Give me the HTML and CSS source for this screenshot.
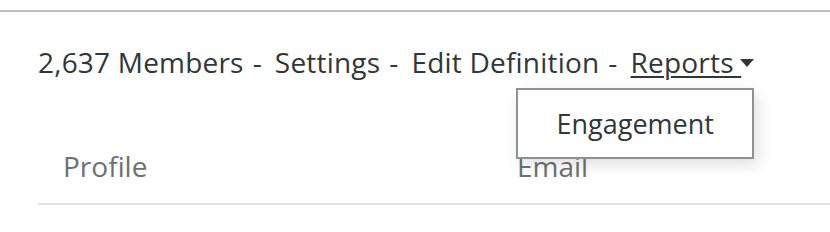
FILE: index.html
```html
<!DOCTYPE html>
<html lang="en">

<head>
    <meta charset="UTF-8">
    <meta name="viewport" content="width=device-width, initial-scale=1.0">
    <title>Members</title>
    <link rel="stylesheet" href="styles.css">
</head>

<body>
    <div class="topo"></div>
    <div class="segmento">
        <div class="acoes">
            <span>2,637 Members</span>
            <span class="sep">-</span>
            <a href="#">Settings</a>
            <span class="sep">-</span>
            <a href="#">Edit Definition</a>
            <span class="sep">-</span>
            <div class="relatorios">
                <a href="#" class="sublinhado">Reports <span class="seta"></span></a>
                <div class="menu">
                    <a href="#">Engagement</a>
                </div>
            </div>
        </div>
        <div class="cabecalho">
            <div class="col perfil">Profile</div>
            <div class="col email">Email</div>
        </div>
    </div>
</body>

</html>
```

FILE: styles.css
```css
body {
    margin: 0;
    font-family: "Open Sans", "Liberation Sans", sans-serif;
    background: #fff;
    color: #31363a;
}

.topo {
    height: 10px;
    border-bottom: 2px solid #bcc3c7;
}

.segmento {
    padding-left: 38px;
}

.acoes {
    display: flex;
    align-items: baseline;
    font-size: 28px;
    line-height: 38px;
    margin-top: 31px;
    letter-spacing: 0.2px;
}

.acoes a {
    color: #31363a;
    text-decoration: none;
}

.sep {
    margin: 0 13px 0 9px;
}

.relatorios {
    position: relative;
}

.acoes .sublinhado {
    text-decoration: underline;
    text-decoration-thickness: 2px;
    text-underline-offset: 3px;
}

.seta {
    display: inline-block;
    width: 0;
    height: 0;
    border-left: 7.5px solid transparent;
    border-right: 7.5px solid transparent;
    border-top: 8px solid #31363a;
    vertical-align: 6px;
    margin-left: -1px;
}

.menu {
    position: absolute;
    right: 0;
    top: 45px;
    width: 234px;
    height: 67px;
    background: #fff;
    border: 2px solid #8e9295;
    box-shadow: 4px 6px 14px rgba(0, 0, 0, 0.12);
    display: flex;
    align-items: center;
    justify-content: center;
    z-index: 2;
}

.menu a {
    font-size: 27px;
    letter-spacing: 0;
}

.cabecalho {
    display: flex;
    margin-top: 66px;
    height: 56px;
    align-items: flex-start;
    border-bottom: 2px solid #e1e4e6;
    font-size: 28px;
    line-height: 38px;
    color: #6b7176;
}

.col {
    padding-left: 25px;
}

.perfil {
    width: 429px;
}
```
